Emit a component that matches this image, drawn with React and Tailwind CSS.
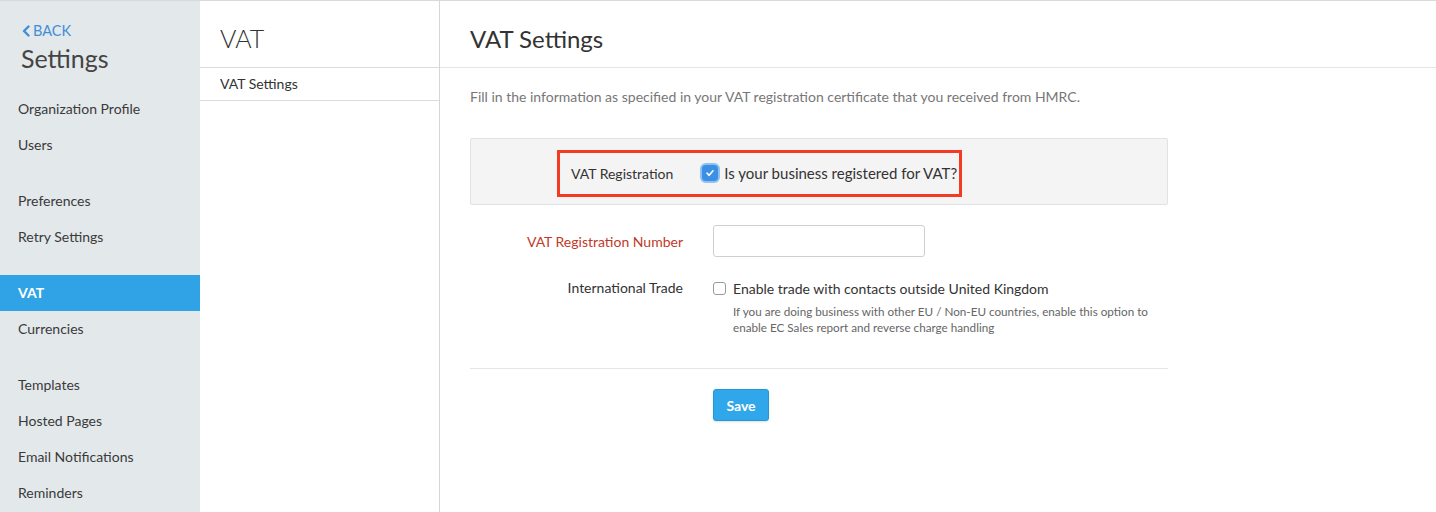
import React from 'react';

const groups = [
  ['Organization Profile', 'Users'],
  ['Preferences', 'Retry Settings'],
  ['VAT', 'Currencies'],
  ['Templates', 'Hosted Pages', 'Email Notifications', 'Reminders'],
];

function Sidebar() {
  return (
    <div className="w-[200px] shrink-0 bg-[#e3e8eb] h-full">
      <div className="h-[90px] pl-[21px] pt-[20px]">
        <a className="flex items-center text-[#3f8fd8] text-[14.5px] leading-[20px] uppercase">
          <svg width="10" height="12" viewBox="0 0 10 12" className="mr-[2px]">
            <path d="M7.5 1.5 L3 6 L7.5 10.5" fill="none" stroke="#3f8fd8" strokeWidth="2.4" strokeLinecap="round" strokeLinejoin="round" />
          </svg>
          Back
        </a>
        <h1 className="text-[25px] leading-[32px] text-[#444] mt-[1px]">Settings</h1>
      </div>
      <nav className="flex flex-col gap-[20px]">
        {groups.map((g, i) => (
          <div key={i}>
            {g.map((item) => (
              <div
                key={item}
                className={`h-[36px] flex items-center pl-[18px] pb-[2px] text-[14px] ${
                  item === 'VAT' ? 'bg-[#30a3e6] text-white font-bold' : 'text-[#3a3a3a]'
                }`}
              >
                {item}
              </div>
            ))}
          </div>
        ))}
      </nav>
    </div>
  );
}

function Checkbox({ checked }) {
  if (checked) {
    return (
      <span className="w-[16px] h-[16px] rounded-[4px] bg-[#3b8fe5] ring-[2px] ring-[#8ec0f2] flex items-center justify-center">
        <svg width="10" height="10" viewBox="0 0 10 10">
          <path d="M2 5.2 L4.2 7.3 L8 2.8" fill="none" stroke="white" strokeWidth="1.6" strokeLinecap="round" strokeLinejoin="round" />
        </svg>
      </span>
    );
  }
  return <span className="w-[13px] h-[13px] rounded-[3px] border border-[#9a9a9a] bg-white" />;
}

export default function App() {
  return (
    <div
      className="flex w-[1436px] h-[512px] bg-white border-t border-[#d9d9d9] overflow-hidden"
      style={{ fontFamily: 'Lato, "Open Sans", sans-serif' }}
    >
      <Sidebar />

      <div className="w-[240px] shrink-0 border-r border-[#d6d6d6]">
        <div className="h-[67px] border-b border-[#dcdcdc] pl-[20px] flex items-center">
          <h2 className="text-[25px] text-[#333] font-light pt-[10px]">VAT</h2>
        </div>
        <div className="h-[33px] border-b border-[#dcdcdc] pl-[20px] flex items-center pb-[1px] text-[14px] text-[#333]">
          VAT Settings
        </div>
      </div>

      <div className="flex-1">
        <div className="h-[67px] border-b border-[#e6e6e6] pl-[30px] flex items-center">
          <h2 className="text-[24px] text-[#333] pt-[10px]">VAT Settings</h2>
        </div>
        <div className="pl-[30px] w-[728px]">
          <p className="text-[14px] text-[#777] mt-[19px] leading-[20px]">
            Fill in the information as specified in your VAT registration certificate that you received from HMRC.
          </p>

          <div className="mt-[31px] h-[67px] w-[698px] bg-[#f4f4f4] border border-[#e2e2e2] rounded-[2px] flex items-center">
            <div className="ml-[86px] mt-[3px] h-[47px] w-[405px] border-[3px] border-[#f33a22] flex items-center pl-[11px] text-[14px] text-[#333]">
              <span>VAT Registration</span>
              <span className="ml-[29px] mr-[6px] flex"><Checkbox checked /></span>
              <span className="text-[15px]">Is your business registered for VAT?</span>
            </div>
          </div>

          <div className="flex items-center mt-[20px]">
            <label className="w-[213px] text-right text-[14px] text-[#c0392b]">VAT Registration Number</label>
            <input className="ml-[30px] w-[212px] h-[32px] border border-[#cfcfcf] rounded-[3px] bg-white" />
          </div>

          <div className="flex mt-[21px]">
            <label className="w-[213px] text-right text-[14px] text-[#333] leading-[20px]">International Trade</label>
            <div className="ml-[30px]">
              <div className="flex items-center h-[20px] text-[14px] text-[#333]">
                <Checkbox />
                <span className="ml-[7px]">Enable trade with contacts outside United Kingdom</span>
              </div>
              <p className="ml-[20px] mt-[5px] text-[11.7px] text-[#666] leading-[16px]">
                If you are doing business with other EU / Non-EU countries, enable this option to
                <br />
                enable EC Sales report and reverse charge handling
              </p>
            </div>
          </div>

          <div className="mt-[33px] w-[698px] border-t border-[#e6e6e6]" />

          <div className="pl-[243px] mt-[20px]">
            <button className="w-[56px] h-[32px] bg-[#30a7ea] border border-[#2596d6] rounded-[3px] text-white text-[14px] font-bold shadow-sm">
              Save
            </button>
          </div>
        </div>
      </div>
    </div>
  );
}
